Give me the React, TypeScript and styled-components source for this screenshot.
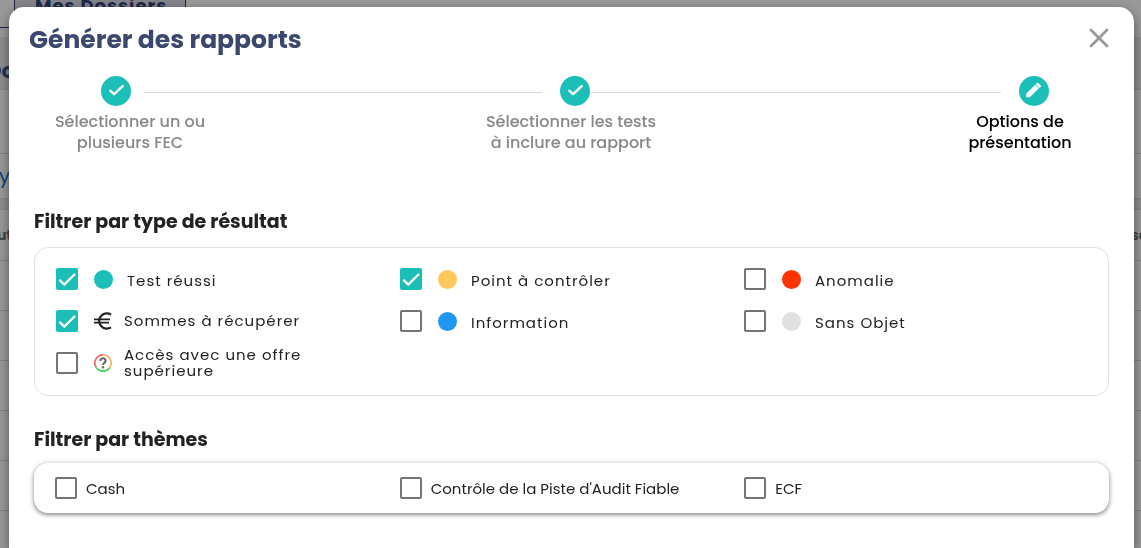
import React from "react";
import styled, { createGlobalStyle } from "styled-components";

const GlobalStyle = createGlobalStyle`
  * { box-sizing: border-box; }
  body {
    margin: 0;
    background: #999;
    color: #222;
    font-family: Poppins, Inter, "Open Sans", sans-serif;
    font-size: 15px;
  }
`;

const Page = styled.div`
  height: 100vh;
  overflow: hidden;
`;

const TabBar = styled.nav`
  display: flex;
  height: 28px;
  margin-bottom: 9px;
  &::before, &::after {
    content: "";
    border-bottom: 1px solid #1c2440;
  }
  &::before { width: 14px; }
  &::after { flex: 1; border-color: #999; }
`;

const Tab = styled.a`
  padding: 0 18px 0 20px;
  border: solid #1c2440;
  border-width: 0 1px;
  background: #85868c;
  color: #1f2847;
  font-size: 18px;
  font-weight: 700;
  line-height: 12px;
  letter-spacing: 1px;
  text-decoration: none;
`;

const Band = styled.div<{ $height: number; $dark?: boolean; $color?: string }>`
  display: flex;
  align-items: center;
  justify-content: space-between;
  height: ${(p) => p.$height}px;
  border-bottom: 1px solid #858585;
  background: ${(p) => (p.$dark ? "#8e8e8e" : "#999")};
  color: ${(p) => p.$color ?? "#444"};
  font-weight: 700;
`;

const Clip = styled.span<{ $size: number; $weight?: number; $width?: number; $top?: number }>`
  display: flex;
  justify-content: flex-end;
  width: ${(p) => p.$width ?? 10}px;
  padding-top: ${(p) => p.$top ?? 0}px;
  overflow: hidden;
  font-size: ${(p) => p.$size}px;
  font-weight: ${(p) => p.$weight ?? 700};
`;

const ClipRight = styled(Clip)`
  justify-content: flex-start;
`;

const Overlay = styled.div`
  position: fixed;
  inset: 0;
  display: flex;
  padding: 7px 7px 0 9px;
`;

const Dialog = styled.section`
  flex: 1;
  min-width: 0;
  padding: 0 25px;
  overflow: hidden;
  border-radius: 15px 15px 0 0;
  background: #fff;
  box-shadow: 0 4px 12px rgba(0, 0, 0, 0.45);
`;

const DialogHeader = styled.header`
  display: flex;
  align-items: center;
  justify-content: space-between;
  height: 62px;
  margin: 0 -5px;
`;

const Title = styled.h1`
  margin: 0;
  padding-top: 4px;
  color: #3b476d;
  font-size: 25px;
  font-weight: 700;
  line-height: 40px;
`;

const CloseButton = styled.button`
  display: flex;
  padding: 0;
  border: 0;
  background: none;
  color: #999;
  cursor: pointer;
`;

const Track = styled.div`
  display: grid;
  grid-template-columns: 30px 1fr 30px 1fr 30px;
  align-items: center;
  margin-top: 7px;
  padding: 0 60px 0 67px;
`;

const StepIcon = styled.span`
  display: flex;
  align-items: center;
  justify-content: center;
  width: 30px;
  height: 30px;
  border-radius: 50%;
  background: #1bbfb8;
`;

const Segment = styled.span<{ $start: number }>`
  padding: 2px 18px 0 ${(p) => p.$start}px;
  &::before {
    content: "";
    display: block;
    height: 1px;
    background: #dcdcdc;
  }
`;

const StepLabels = styled.ol`
  display: grid;
  grid-template-columns: 1fr auto 1fr;
  margin: 0;
  padding: 5px 20px 0 19px;
  list-style: none;
`;

const StepLabel = styled.li<{ $active?: boolean; $width: number }>`
  width: ${(p) => p.$width}px;
  color: ${(p) => (p.$active ? "#000" : "#888")};
  font-size: 16px;
  font-weight: 500;
  line-height: 21px;
  text-align: center;
  white-space: nowrap;
  &:last-child { justify-self: end; }
`;

const Group = styled.fieldset`
  min-width: 0;
  margin: 0;
  padding: 0;
  border: 0;
`;

const Legend = styled.legend<{ $top: number; $gap: number }>`
  padding: ${(p) => p.$top}px 0 ${(p) => p.$gap}px;
  font-size: 19px;
  font-weight: 700;
  line-height: 30px;
`;

const Card = styled.div<{ $raised?: boolean }>`
  display: grid;
  grid-template-columns: repeat(3, 1fr);
  padding: ${(p) => (p.$raised ? "4px 20px 4px 21px" : "10px 20px 11px 21px")};
  border: ${(p) => (p.$raised ? "0" : "1px solid #e0e0e0")};
  border-radius: 14px;
  box-shadow: ${(p) =>
    p.$raised ? "0 2px 4px rgba(0,0,0,.4), 0 0 6px rgba(0,0,0,.14)" : "none"};
`;

const Option = styled.label`
  display: flex;
  align-items: center;
  min-height: 42px;
  cursor: pointer;
`;

const Box = styled.span`
  display: grid;
  width: 22px;
  height: 22px;
  > * { grid-area: 1 / 1; }
  > svg { pointer-events: none; visibility: hidden; }
  > input:checked + svg { visibility: visible; }
`;

const BoxInput = styled.input`
  appearance: none;
  width: 22px;
  height: 22px;
  margin: 0;
  border: 2px solid #757575;
  border-radius: 2px;
  background: #fff;
  &:checked {
    border-color: #1bbfb8;
    background: #1bbfb8;
  }
`;

const Marker = styled.span`
  display: flex;
  align-items: center;
  justify-content: center;
  width: 20px;
  margin-left: 15px;
`;

const Dot = styled.span<{ $color: string }>`
  width: 19px;
  height: 19px;
  border-radius: 50%;
  background: ${(p) => p.$color};
`;

const OptionText = styled.span<{ $dot?: boolean }>`
  max-width: 210px;
  padding: ${(p) => (p.$dot ? "4px 0 0 14px" : "0 0 0 11px")};
  line-height: 16px;
  letter-spacing: 1px;
`;

const ThemeText = styled.span`
  padding-left: 9px;
`;

const CheckMark = () => (
  <svg width="22" height="22" viewBox="0 0 22 22" fill="none" stroke="#fff" strokeWidth="2.4">
    <path d="M3.5 11.8 8.3 16.6 19 6" />
  </svg>
);

const StepCheck = () => (
  <svg width="30" height="30" viewBox="0 0 30 30" fill="none" stroke="#fff" strokeWidth="2.5" strokeLinecap="round" strokeLinejoin="round">
    <path d="M9.5 14.9 13.1 18.1 21.7 10.1" />
  </svg>
);

const Pencil = () => (
  <svg width="30" height="30" viewBox="0 0 30 30" fill="#fff">
    <path d="M7.1 17.7v2.700a.9.9 0 0 0 .9.9h2.800L19.900 12.300 16.200 8.700z" />
    <path d="M16.700 8.200 17.700 7.300a1.300 1.300 0 0 1 1.800 0L21.600 9.200a1.300 1.300 0 0 1 0 1.800L20.400 11.900z" />
  </svg>
);

const Euro = () => (
  <svg width="20" height="20" viewBox="0 0 20 20" fill="none" stroke="#222">
    <path d="M18 3.700A7.600 7.600 0 1 0 18 16.300" strokeWidth="2.200" />
    <path d="M1 8.300H17M1 11.700H16" strokeWidth="1.700" />
  </svg>
);

const Upgrade = () => (
  <svg width="20" height="20" viewBox="0 0 20 20" fill="none" strokeWidth="1.700">
    <path d="M3.200 14.500A8.200 8.200 0 0 1 10 1.800" stroke="#ff6363" />
    <path d="M10 1.800A8.200 8.200 0 0 1 16.800 14.500" stroke="#fbb45c" />
    <path d="M16.800 14.500A8.200 8.200 0 0 1 3.200 14.500" stroke="#3bd65a" />
    <path d="M7.500 8a2.500 2.500 0 1 1 3.700 2c-.8.500-1.200.9-1.200 2" stroke="#666" strokeWidth="2" />
    <circle cx="10" cy="14.300" r="1.200" fill="#666" />
  </svg>
);

const results = [
  { label: "Test réussi", color: "#1bbfb8", checked: true },
  { label: "Point à contrôler", color: "#ffc85c", checked: true },
  { label: "Anomalie", color: "#ff3300" },
  { label: "Sommes à récupérer", icon: <Euro />, checked: true },
  { label: "Information", color: "#2196f3" },
  { label: "Sans Objet", color: "#e0e0e0" },
  { label: "Accès avec une offre supérieure", icon: <Upgrade /> },
];

const themes = ["Cash", "Contrôle de la Piste d'Audit Fiable", "ECF"];

const Checkbox = ({ checked }: { checked?: boolean }) => (
  <Box>
    <BoxInput type="checkbox" defaultChecked={checked} />
    <CheckMark />
  </Box>
);

export default function App() {
  return (
    <>
      <GlobalStyle />
      <Page>
        <TabBar>
          <Tab href="#dossiers">Mes Dossiers</Tab>
        </TabBar>
        <Band $height={53} $dark $color="#2a3350">
          <Clip $size={21} $width={15} $top={14}>Do</Clip>
        </Band>
        <Band $height={64} />
        <Band $height={45} $color="#0f4478">
          <Clip $size={20} $weight={400}>y</Clip>
        </Band>
        <Band $height={11} $dark />
        <Band $height={51}>
          <Clip $size={14} $width={12}>ut</Clip>
          <ClipRight $size={14}>se</ClipRight>
        </Band>
        {[1, 2, 3, 4, 5, 6].map((row) => (
          <Band key={row} $height={50} />
        ))}
      </Page>
      <Overlay>
        <Dialog role="dialog" aria-modal="true" aria-labelledby="dialog-title">
          <DialogHeader>
            <Title id="dialog-title">Générer des rapports</Title>
            <CloseButton type="button" aria-label="Fermer">
              <svg width="30" height="30" viewBox="0 0 30 30" stroke="currentColor" strokeWidth="2.700" strokeLinecap="round">
                <path d="M7 7 23 23M23 7 7 23" />
              </svg>
            </CloseButton>
          </DialogHeader>
          <Track>
            <StepIcon><StepCheck /></StepIcon>
            <Segment $start={13} />
            <StepIcon><StepCheck /></StepIcon>
            <Segment $start={0} />
            <StepIcon><Pencil /></StepIcon>
          </Track>
          <StepLabels>
            <StepLabel $width={154}>Sélectionner un ou<br />plusieurs FEC</StepLabel>
            <StepLabel $width={174}>Sélectionner les tests<br />à inclure au rapport</StepLabel>
            <StepLabel $width={138} $active aria-current="step">Options de<br />présentation</StepLabel>
          </StepLabels>
          <Group>
            <Legend $top={54} $gap={10}>Filtrer par type de résultat</Legend>
            <Card>
              {results.map((r) => (
                <Option key={r.label}>
                  <Checkbox checked={r.checked} />
                  <Marker>{r.icon ?? <Dot $color={r.color!} />}</Marker>
                  <OptionText $dot={!r.icon}>{r.label}</OptionText>
                </Option>
              ))}
            </Card>
          </Group>
          <Group>
            <Legend $top={29} $gap={8}>Filtrer par thèmes</Legend>
            <Card $raised>
              {themes.map((t) => (
                <Option key={t}>
                  <Checkbox />
                  <ThemeText>{t}</ThemeText>
                </Option>
              ))}
            </Card>
          </Group>
        </Dialog>
      </Overlay>
    </>
  );
}
